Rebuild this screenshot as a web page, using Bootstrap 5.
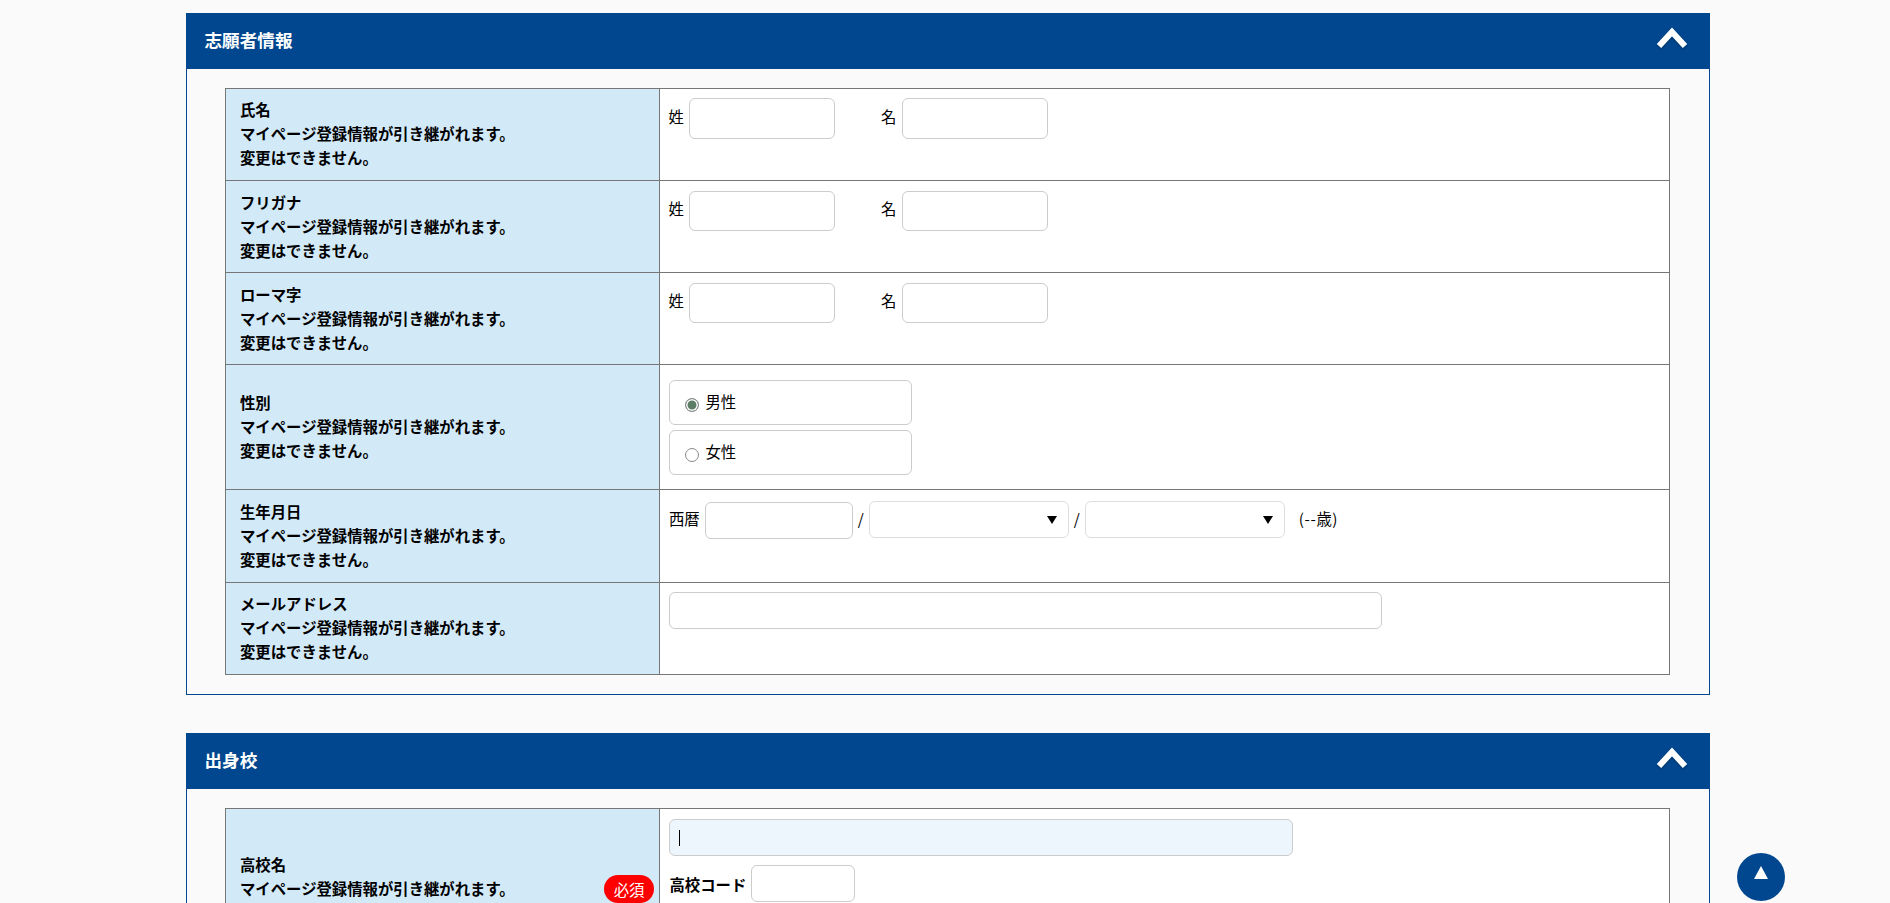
<!DOCTYPE html>
<html lang="ja">
<head>
<meta charset="utf-8">
<title>志願者情報</title>
<link href="https://cdn.jsdelivr.net/npm/bootstrap@5.3.0/dist/css/bootstrap.min.css" rel="stylesheet">
<style>
html{overflow:hidden}
body{background:#fafafa;color:#000;font-family:"Noto Sans CJK JP","Liberation Sans",sans-serif;font-size:15.36px;line-height:24px}
.apply-wrap{width:1524px;margin:13px 0 0 186px}
.apply-panel{border:1px solid #00478f;border-top:0;background:#fafafa;margin-bottom:38px}
.apply-head{height:56px;margin:0 -1px;padding:0 22px 2px 18.5px;background:#00478f;color:#fff;font-size:17.6px;font-weight:700}
.apply-chev{width:32px;height:22px;margin-bottom:6px;filter:drop-shadow(0 1px 1px rgba(0,0,0,.3))}
.apply-body{padding:19px 39px 19px 38px}
.apply-tbl.table{--bs-table-bg:#fff;--bs-table-border-color:#777;border-color:#777;margin:0;width:1445px;table-layout:fixed;color:#000}
.apply-tbl.table>tbody>tr>th{width:434px;padding:8px 14px 11px;background:#d2e9f8;font-weight:700;font-size:15.36px;line-height:24px;vertical-align:middle;position:relative}
.apply-tbl.table>tbody>tr.row-kana>th{padding:9px 14px 10px}
.apply-tbl.table>tbody>tr>td{padding:9px 9px 0 8.5px;background:#fff;vertical-align:top;font-size:15.36px}
.apply-tbl .row-gender{height:125px}
.apply-tbl .row-birth{height:93px}
.apply-tbl .row-school{height:162px}
.apply-input.form-control{border:1px solid #ccc;border-radius:6px;background:#fff;padding:0 10px;min-height:0;box-shadow:none;flex:none}
.w-name{width:146px;height:40px}
.name-row.first-row{padding-top:0}
.first-row .w-name{height:41px}
.first-row .name-lbl{margin-top:6px}
.w-year{width:148px;height:37px}
.w-mail{width:713px;height:37px}
.w-school{width:624px;height:37px}
.w-code{width:104px;height:37px}
.apply-input.is-active{background:#eef6fd}
.apply-select.form-select{width:200px;height:37px;flex:none;margin-bottom:2px;border:1px solid #ddd;border-radius:6px;padding:0;box-shadow:none;background-color:#fff;background-size:10px 8px;background-position:right 11px center;background-image:url("data:image/svg+xml,%3Csvg xmlns='http://www.w3.org/2000/svg' viewBox='0 0 10 8'%3E%3Cpath d='M0 0h10L5 8z' fill='%23000'/%3E%3C/svg%3E")}
.name-row{padding-top:1px}
.name-lbl{margin-top:5px;margin-right:5.5px}
.name-gap{margin-left:45.5px}
.opt-box{width:243px;height:45px;border:1px solid #ccc;border-radius:6px;background:#fff;padding-left:15px;margin-bottom:5px}
.opt-stack{padding-top:6px}
.opt-box .form-check-input{width:14px;height:14px;margin:4px 7px 0 0;border:1px solid #8a8a8a;background-color:#fff;flex:none}
.opt-box .form-check-input:checked{background-image:none;background-color:#5c7c66;border-color:#8a8a8a;box-shadow:inset 0 0 0 1.5px #fff}
.opt-box .form-check-label{margin-top:-3px}
.birth-row{padding-top:2px}
.birth-lbl{margin-right:5px;margin-left:.5px;margin-bottom:5px}
.birth-sep{width:16px;text-align:center;margin-bottom:5px}
.birth-sep+select+.birth-sep{width:16px}
.birth-age{margin-left:14px;margin-bottom:5px;letter-spacing:.6px}
.need-pill{right:5px;top:calc(50% - 1px);transform:translateY(-50%);width:50px;height:28px;border-radius:14px;background:#f00;color:#fff;font-size:15.36px;font-weight:400;line-height:28px;text-align:center}
.caret-bar{left:10.5px;top:11px;width:1px;height:16px;background:#000}
.school-top{margin-top:1px;margin-bottom:9px}
.code-lbl{margin-left:1px;margin-right:4.5px}
.to-top{right:105px;bottom:2px;width:48px;height:48px;border-radius:50%;background:#00478f}
.to-top svg{width:14px;height:13px;margin-bottom:9px}
</style>
</head>
<body>
<div class="apply-wrap">

<section class="apply-panel">
  <div class="apply-head d-flex align-items-center justify-content-between">
    <span>志願者情報</span>
    <svg class="apply-chev" viewBox="0 0 32 22" aria-hidden="true"><path d="M3 20 16 6l13 14" fill="none" stroke="#fff" stroke-width="6"/></svg>
  </div>
  <div class="apply-body">
    <table class="table table-bordered apply-tbl">
      <tbody>
        <tr>
          <th>氏名<br>マイページ登録情報が引き継がれます。<br>変更はできません。</th>
          <td><div class="d-flex align-items-start name-row first-row"><span class="name-lbl">姓</span><input class="form-control apply-input w-name" type="text"><span class="name-lbl name-gap">名</span><input class="form-control apply-input w-name" type="text"></div></td>
        </tr>
        <tr class="row-kana">
          <th>フリガナ<br>マイページ登録情報が引き継がれます。<br>変更はできません。</th>
          <td><div class="d-flex align-items-start name-row"><span class="name-lbl">姓</span><input class="form-control apply-input w-name" type="text"><span class="name-lbl name-gap">名</span><input class="form-control apply-input w-name" type="text"></div></td>
        </tr>
        <tr class="row-kana">
          <th>ローマ字<br>マイページ登録情報が引き継がれます。<br>変更はできません。</th>
          <td><div class="d-flex align-items-start name-row"><span class="name-lbl">姓</span><input class="form-control apply-input w-name" type="text"><span class="name-lbl name-gap">名</span><input class="form-control apply-input w-name" type="text"></div></td>
        </tr>
        <tr class="row-gender">
          <th>性別<br>マイページ登録情報が引き継がれます。<br>変更はできません。</th>
          <td><div class="opt-stack">
            <div class="opt-box d-flex align-items-center"><input class="form-check-input" type="radio" name="sex" id="s1" checked><label class="form-check-label" for="s1">男性</label></div>
            <div class="opt-box d-flex align-items-center"><input class="form-check-input" type="radio" name="sex" id="s2"><label class="form-check-label" for="s2">女性</label></div>
          </div></td>
        </tr>
        <tr class="row-birth">
          <th>生年月日<br>マイページ登録情報が引き継がれます。<br>変更はできません。</th>
          <td><div class="d-flex align-items-center birth-row">
            <span class="birth-lbl">西暦</span><input class="form-control apply-input w-year" type="text">
            <span class="birth-sep">/</span><select class="form-select apply-select"></select>
            <span class="birth-sep">/</span><select class="form-select apply-select"></select>
            <span class="birth-age">(--歳)</span>
          </div></td>
        </tr>
        <tr>
          <th>メールアドレス<br>マイページ登録情報が引き継がれます。<br>変更はできません。</th>
          <td><input class="form-control apply-input w-mail" type="text"></td>
        </tr>
      </tbody>
    </table>
  </div>
</section>

<section class="apply-panel">
  <div class="apply-head d-flex align-items-center justify-content-between">
    <span>出身校</span>
    <svg class="apply-chev" viewBox="0 0 32 22" aria-hidden="true"><path d="M3 20 16 6l13 14" fill="none" stroke="#fff" stroke-width="6"/></svg>
  </div>
  <div class="apply-body">
    <table class="table table-bordered apply-tbl">
      <tbody>
        <tr class="row-school">
          <th>高校名<br>マイページ登録情報が引き継がれます。<br>変更はできません。<span class="need-pill position-absolute">必須</span></th>
          <td>
            <div class="position-relative w-school school-top"><input class="form-control apply-input is-active w-school" type="text"><span class="caret-bar position-absolute"></span></div>
            <div class="d-flex align-items-center"><b class="code-lbl">高校コード</b><input class="form-control apply-input w-code" type="text"></div>
          </td>
        </tr>
      </tbody>
    </table>
  </div>
</section>
</div>

<a class="to-top position-fixed d-flex align-items-center justify-content-center" href="#" aria-label="top"><svg viewBox="0 0 14 13" aria-hidden="true"><path d="M7 0 14 13H0z" fill="#fff"/></svg></a>

<script src="https://cdn.jsdelivr.net/npm/bootstrap@5.3.0/dist/js/bootstrap.bundle.min.js"></script>
</body>
</html>
